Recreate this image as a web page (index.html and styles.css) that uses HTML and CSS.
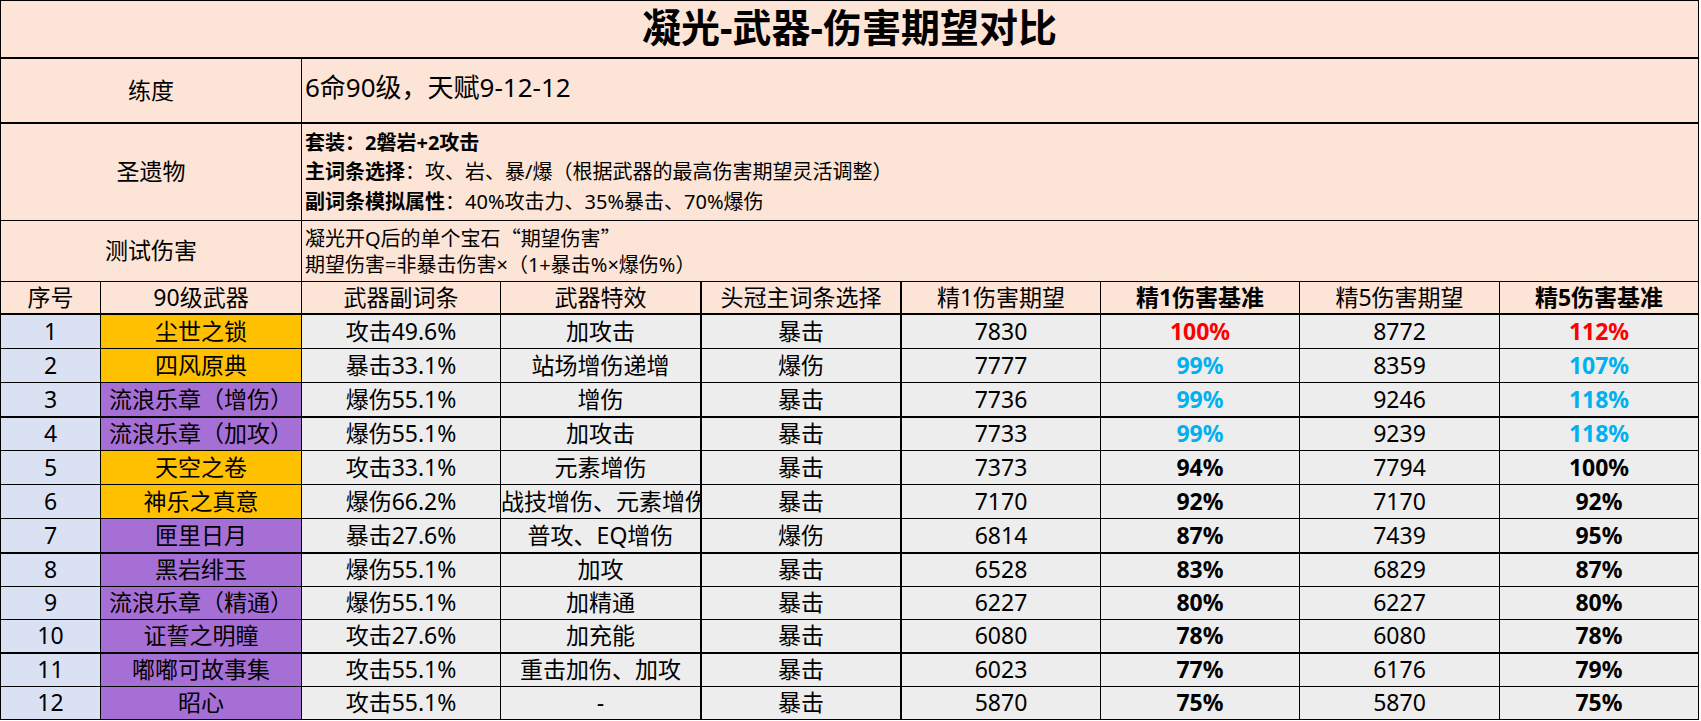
FILE: index.html
```html
<!DOCTYPE html>
<html lang="zh">
<head>
<meta charset="utf-8">
<title>凝光-武器-伤害期望对比</title>
<link rel="stylesheet" href="styles.css">
</head>
<body>
<div class="sheet">
  <div class="cell title full thick-b">凝光-武器-伤害期望对比</div>

  <div class="cell label span-l thick-b">练度</div>
  <div class="cell info big span-r thick-b">6命90级，天赋9-12-12</div>

  <div class="cell label span-l">圣遗物</div>
  <div class="cell info small art span-r">
    <div><b>套装：2磐岩+2攻击</b></div>
    <div><b>主词条选择</b>：攻、岩、暴/爆（根据武器的最高伤害期望灵活调整）</div>
    <div><b>副词条模拟属性</b>：40%攻击力、35%暴击、70%爆伤</div>
  </div>

  <div class="cell label span-l">测试伤害</div>
  <div class="cell info small test span-r">
    <div>凝光开Q后的单个宝石<span class="cjk">“</span>期望伤害<span class="cjk">”</span></div>
    <div>期望伤害=非暴击伤害×（1+暴击%×爆伤%）</div>
  </div>

  <div class="cell hd thick-b">序号</div><div class="cell hd thick-b">90级武器</div><div class="cell hd thick-b">武器副词条</div><div class="cell hd thick-b pre">武器特效</div><div class="cell hd thick-b mid">头冠主词条选择</div><div class="cell hd thick-b">精1伤害期望</div><div class="cell hd thick-b bold">精1伤害基准</div><div class="cell hd thick-b">精5伤害期望</div><div class="cell hd thick-b bold">精5伤害基准</div>

  <div class="cell d no">1</div><div class="cell d gold">尘世之锁</div><div class="cell d">攻击49.6%</div><div class="cell d pre">加攻击</div><div class="cell d mid">暴击</div><div class="cell d">7830</div><div class="cell d pct red">100%</div><div class="cell d">8772</div><div class="cell d pct red">112%</div>

  <div class="cell d no">2</div><div class="cell d gold">四风原典</div><div class="cell d">暴击33.1%</div><div class="cell d pre">站场增伤递增</div><div class="cell d mid">爆伤</div><div class="cell d">7777</div><div class="cell d pct blue">99%</div><div class="cell d">8359</div><div class="cell d pct blue">107%</div>

  <div class="cell d no thick-b">3</div><div class="cell d purple thick-b">流浪乐章（增伤）</div><div class="cell d thick-b">爆伤55.1%</div><div class="cell d pre thick-b">增伤</div><div class="cell d mid thick-b">暴击</div><div class="cell d thick-b">7736</div><div class="cell d pct blue thick-b">99%</div><div class="cell d thick-b">9246</div><div class="cell d pct blue thick-b">118%</div>

  <div class="cell d no">4</div><div class="cell d purple">流浪乐章（加攻）</div><div class="cell d">爆伤55.1%</div><div class="cell d pre">加攻击</div><div class="cell d mid">暴击</div><div class="cell d">7733</div><div class="cell d pct blue">99%</div><div class="cell d">9239</div><div class="cell d pct blue">118%</div>

  <div class="cell d no">5</div><div class="cell d gold">天空之卷</div><div class="cell d">攻击33.1%</div><div class="cell d pre">元素增伤</div><div class="cell d mid">暴击</div><div class="cell d">7373</div><div class="cell d pct">94%</div><div class="cell d">7794</div><div class="cell d pct">100%</div>

  <div class="cell d no">6</div><div class="cell d gold">神乐之真意</div><div class="cell d">爆伤66.2%</div><div class="cell d pre clip">战技增伤、元素增伤</div><div class="cell d mid">暴击</div><div class="cell d">7170</div><div class="cell d pct">92%</div><div class="cell d">7170</div><div class="cell d pct">92%</div>

  <div class="cell d no thick-b">7</div><div class="cell d purple thick-b">匣里日月</div><div class="cell d thick-b">暴击27.6%</div><div class="cell d pre thick-b">普攻、EQ增伤</div><div class="cell d mid thick-b">爆伤</div><div class="cell d thick-b">6814</div><div class="cell d pct thick-b">87%</div><div class="cell d thick-b">7439</div><div class="cell d pct thick-b">95%</div>

  <div class="cell d no">8</div><div class="cell d purple">黑岩绯玉</div><div class="cell d">爆伤55.1%</div><div class="cell d pre">加攻</div><div class="cell d mid">暴击</div><div class="cell d">6528</div><div class="cell d pct">83%</div><div class="cell d">6829</div><div class="cell d pct">87%</div>

  <div class="cell d no">9</div><div class="cell d purple">流浪乐章（精通）</div><div class="cell d">爆伤55.1%</div><div class="cell d pre">加精通</div><div class="cell d mid">暴击</div><div class="cell d">6227</div><div class="cell d pct">80%</div><div class="cell d">6227</div><div class="cell d pct">80%</div>

  <div class="cell d no thick-b">10</div><div class="cell d purple thick-b">证誓之明瞳</div><div class="cell d thick-b">攻击27.6%</div><div class="cell d pre thick-b">加充能</div><div class="cell d mid thick-b">暴击</div><div class="cell d thick-b">6080</div><div class="cell d pct thick-b">78%</div><div class="cell d thick-b">6080</div><div class="cell d pct thick-b">78%</div>

  <div class="cell d no">11</div><div class="cell d purple">嘟嘟可故事集</div><div class="cell d">攻击55.1%</div><div class="cell d pre">重击加伤、加攻</div><div class="cell d mid">暴击</div><div class="cell d">6023</div><div class="cell d pct">77%</div><div class="cell d">6176</div><div class="cell d pct">79%</div>

  <div class="cell d no">12</div><div class="cell d purple">昭心</div><div class="cell d">攻击55.1%</div><div class="cell d pre">-</div><div class="cell d mid">暴击</div><div class="cell d">5870</div><div class="cell d pct">75%</div><div class="cell d">5870</div><div class="cell d pct">75%</div>
</div>
</body>
</html>
```

FILE: styles.css
```css
html, body {
  margin: 0;
  padding: 0;
  background: #ffffff;
}

body {
  font-family: "Noto Sans", "Noto Sans CJK SC", sans-serif;
  color: #000000;
}

.sheet {
  display: grid;
  width: 1699px;
  box-sizing: border-box;
  border-top: 1px solid #000000;
  border-left: 1px solid #000000;
  background: #fce4d6;
  grid-template-columns: 100px 201px 199px 201px 200px 199px 199px 200px 199px;
  grid-template-rows: 58px 65px 97px 61px 33px 34px 34px 35px 33px 34px 34px 35px 33px 33px 34px 33px 33px;
}

.cell {
  box-sizing: border-box;
  border-right: 1px solid #000000;
  border-bottom: 1px solid #000000;
  display: flex;
  align-items: center;
  justify-content: center;
  overflow: hidden;
  white-space: nowrap;
  font-size: 23px;
  line-height: 1.2;
  min-width: 0;
}

.thick-b {
  border-bottom-width: 2px;
}

.pre,
.mid {
  border-right-width: 2px;
}

.full {
  grid-column: 1 / -1;
}

.span-l {
  grid-column: 1 / 3;
}

.span-r {
  grid-column: 3 / -1;
}

.title {
  font-size: 39px;
  font-weight: 700;
  padding-bottom: 3px;
}

.info {
  justify-content: flex-start;
  padding-left: 3px;
}

.info.small {
  flex-direction: column;
  align-items: flex-start;
  justify-content: center;
  font-size: 20px;
}

.big {
  font-size: 26px;
  padding-bottom: 6px;
}

.art {
  line-height: 29.5px;
}

.test {
  line-height: 26px;
}

.cjk {
  font-family: "Noto Sans CJK SC", sans-serif;
}

.info b {
  font-weight: 700;
}

.hd.bold {
  font-weight: 700;
}

.d {
  background: #ededed;
}

.d.no {
  background: #dae1f3;
}

.d.gold {
  background: #ffc000;
}

.d.purple {
  background: #a66fd5;
}

.d.pct {
  font-weight: 700;
}

.d.red {
  color: #ff0000;
}

.d.blue {
  color: #00b0f0;
}

.d.clip {
  justify-content: flex-start;
}
```
